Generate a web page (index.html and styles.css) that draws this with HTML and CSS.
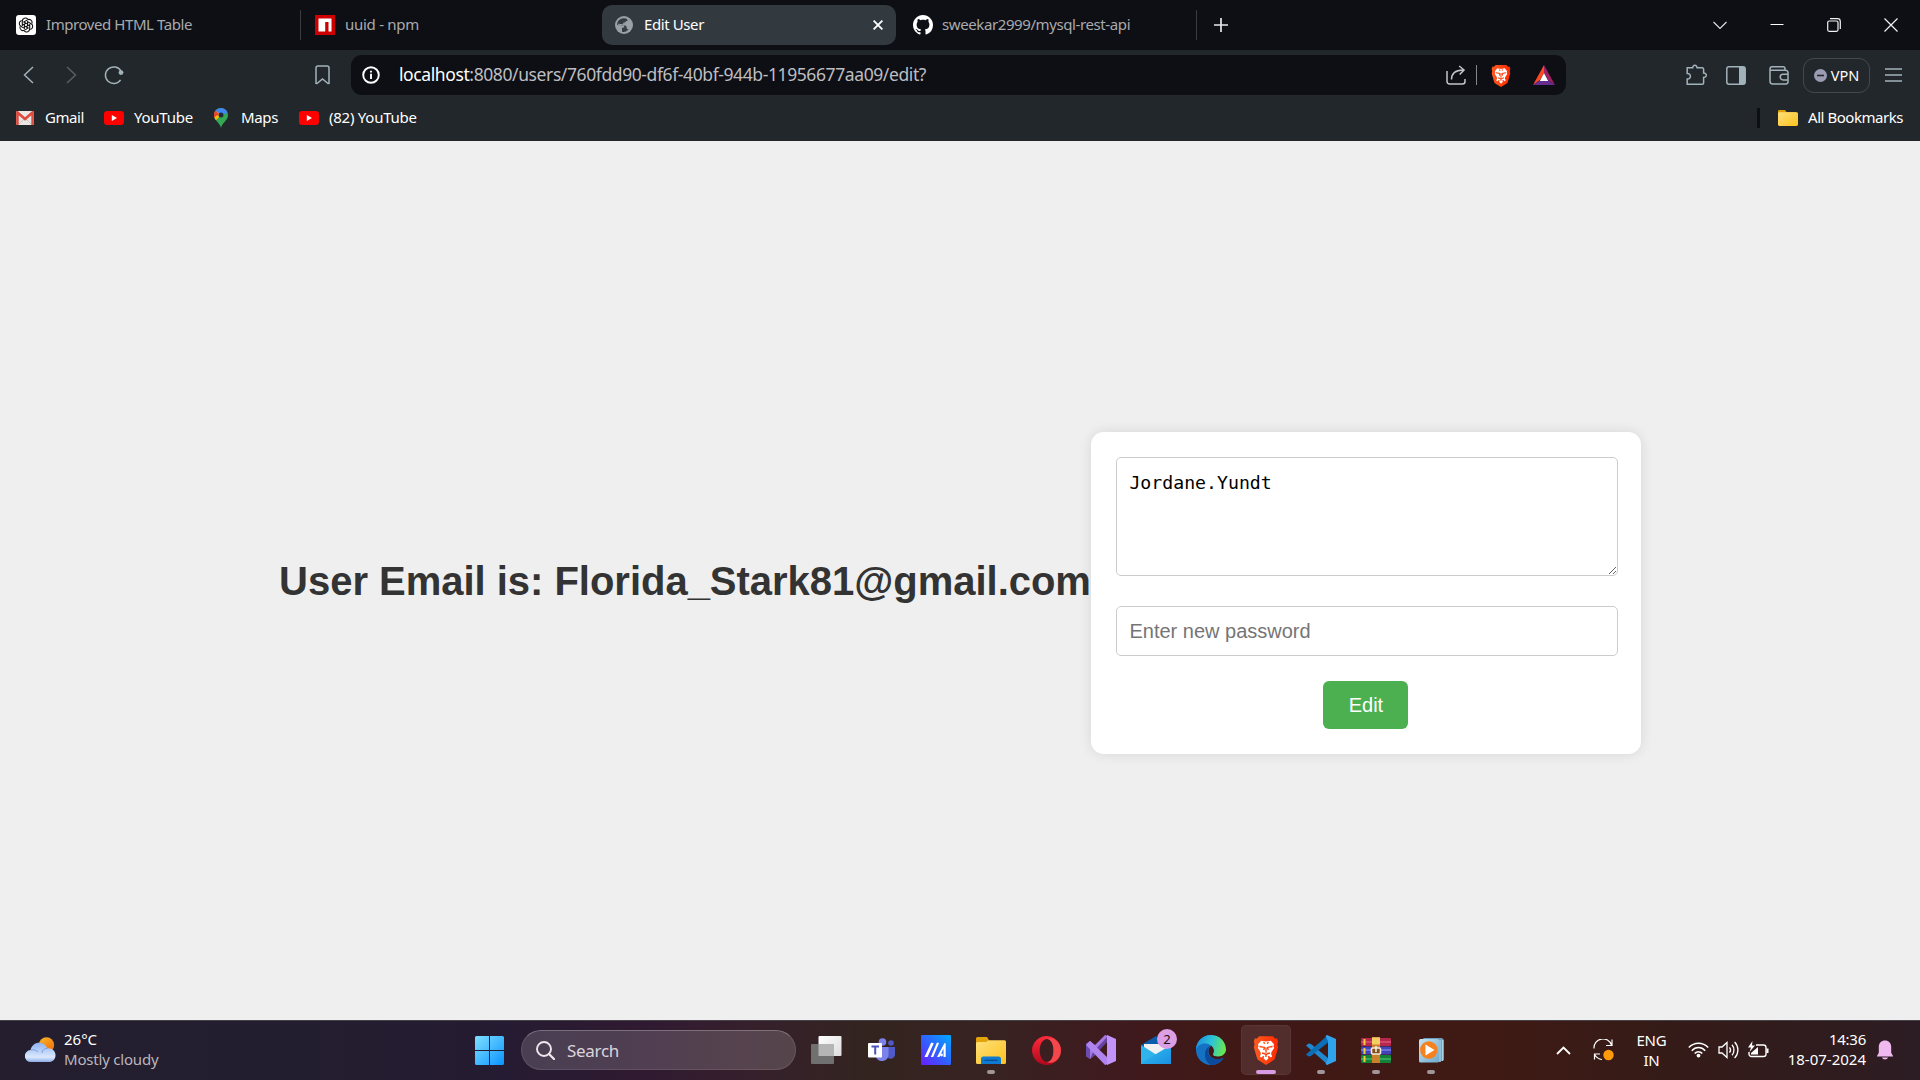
FILE: index.html
```html
<!DOCTYPE html>
<html lang="en">
<head>
<meta charset="utf-8">
<title>Edit User</title>
<link rel="stylesheet" href="styles.css">
</head>
<body>
<svg class="defs" width="0" height="0" aria-hidden="true">
  <defs>
    <linearGradient id="gWin" x1="0" y1="0" x2="1" y2="1"><stop offset="0" stop-color="#7fe0ff"/><stop offset="1" stop-color="#0a93ff"/></linearGradient>
    <linearGradient id="gSun" x1="0" y1="0" x2="0.6" y2="1"><stop offset="0" stop-color="#fbb829"/><stop offset="1" stop-color="#f0700a"/></linearGradient>
    <linearGradient id="gCloud" x1="0" y1="0" x2="0" y2="1"><stop offset="0" stop-color="#8fb3f2"/><stop offset="0.75" stop-color="#dbe8fc"/><stop offset="1" stop-color="#8cabe6"/></linearGradient>
    <linearGradient id="gAsus" x1="0" y1="1" x2="1" y2="0"><stop offset="0" stop-color="#6a1cff"/><stop offset="0.5" stop-color="#2f63ff"/><stop offset="1" stop-color="#00a9ff"/></linearGradient>
    <linearGradient id="gFolder" x1="0" y1="0" x2="1" y2="1"><stop offset="0" stop-color="#ffe07a"/><stop offset="1" stop-color="#fcc21e"/></linearGradient>
    <linearGradient id="gEdge" x1="0" y1="0.3" x2="1" y2="0.5"><stop offset="0" stop-color="#1d8fe0"/><stop offset="0.5" stop-color="#2cc3d6"/><stop offset="1" stop-color="#6be84f"/></linearGradient>
    <linearGradient id="gOpera" x1="0" y1="0" x2="0" y2="1"><stop offset="0" stop-color="#ff2b3c"/><stop offset="1" stop-color="#b0081c"/></linearGradient>
    <linearGradient id="gBrave" x1="0" y1="0" x2="1" y2="0"><stop offset="0" stop-color="#ff5a1f"/><stop offset="1" stop-color="#ff2a00"/></linearGradient>
    <linearGradient id="gMail" x1="0" y1="0" x2="1" y2="1"><stop offset="0" stop-color="#35c3f3"/><stop offset="1" stop-color="#1a8fe0"/></linearGradient>
    <linearGradient id="gView" x1="0" y1="0" x2="1" y2="1"><stop offset="0" stop-color="#ffffff"/><stop offset="1" stop-color="#dcdcdc"/></linearGradient>
    <linearGradient id="gMedia" x1="0" y1="0" x2="1" y2="1"><stop offset="0" stop-color="#c4e4f4"/><stop offset="1" stop-color="#6fa9cc"/></linearGradient>
    <symbol id="youtube" viewBox="0 0 20 14"><rect width="20" height="14" rx="3.2" fill="#f00"/><path d="M7.8 4.1v5.8L13 7z" fill="#fff"/></symbol>
    <symbol id="brave" viewBox="0 0 24 28">
      <path d="M5.6 1.2h12.8L20.6 3.400l1.700-.3L23.400 6.200l-.7 2.200.6 3.200-2.800 9.600c-.4 1.300-1 2-2 2.700L12 28l-6.500-4.100c-1-.7-1.600-1.400-2-2.700L.7 11.600l.6-3.200L.6 6.200 1.700 3.100l1.700.3z" fill="url(#gBrave)"/>
      <path d="M7.500 5.300l4.500.7 4.500-.7 3 3.400-.5 1.500.6 2-2.600 4-.2 1.700 1 1.900-1.200 1.200-2.400-1.700-.5.800.6 1.500L12 24l-2.300-2.400.6-1.500-.5-.8-2.400 1.700-1.200-1.200 1-1.900-.2-1.700-2.600-4 .6-2-.5-1.500z" fill="#fff"/>
      <path d="M5.900 10.700l4.700.9-.7 2.500M18.100 10.700l-4.700.9.7 2.500M9.600 6.900l1.500 1M14.400 6.900l-1.500 1M12 12v4.600M8.300 16.800l2.500.7 1.200 1 1.200-1 2.500-.7M12 18.500v2" fill="none" stroke="#ff4210" stroke-width="1.300"/>
    </symbol>
  </defs>
</svg>

<header class="browser">
  <div class="tabs">
    <div class="tab">
      <svg width="20" height="20" viewBox="0 0 20 20"><rect width="20" height="20" rx="3" fill="#fff"/><g fill="none" stroke="#111" stroke-width="1.100"><path id="petal" d="M10 8.200L6.300 10.300V6.200a3.100 3.100 0 0 1 5.400-2.100"/><use href="#petal" transform="rotate(60 10 10)"/><use href="#petal" transform="rotate(120 10 10)"/><use href="#petal" transform="rotate(180 10 10)"/><use href="#petal" transform="rotate(240 10 10)"/><use href="#petal" transform="rotate(300 10 10)"/></g></svg>
      <span class="tab-title t1">Improved HTML Table</span>
    </div>
    <div class="tab tab-npm">
      <svg width="20" height="20" viewBox="0 0 20 20"><path d="M0 0h20v20H0z" fill="#c00"/><path d="M3.500 3.500h13v13h-3V7h-3.300v9.500H3.500z" fill="#fff"/></svg>
      <span class="tab-title t2">uuid - npm</span>
    </div>
    <div class="tab tab-active">
      <svg width="18" height="18" viewBox="0 0 18 18"><circle cx="9" cy="9" r="9" fill="#9aa0a6"/><path d="M3.600 4.600c-1 1.300-1.500 2.800-1.400 4.400l5 .2c1.800.1 2.300 1.300 2 2.300l-2.200.2v4c3 .7 5-.6 6.500-2.500l-1.600-.2-.3-2.200-1.200-1.200H8.200L7.800 7.500l2.300-.5.600-1.700 2-.6-1-1.900C9 1.600 6 2.200 3.600 4.600z" fill="#343c41"/><path d="M3 8.200l5 .6M8.200 7.200l2.600-.4 1.600.8" stroke="#9aa0a6" fill="none"/></svg>
      <span class="tab-title t3">Edit User</span>
      <svg class="tab-close" width="10" height="10" viewBox="0 0 10 10"><path d="M.6.600l8.800 8.800M9.400.6L.6 9.400" stroke="#fff" stroke-width="1.800"/></svg>
    </div>
    <div class="tab tab-github">
      <svg width="20" height="20" viewBox="0 0 16 16"><path fill="#fff" d="M8 0C3.580 0 0 3.580 0 8c0 3.540 2.290 6.530 5.470 7.590.4.070.55-.17.55-.38 0-.19-.01-.82-.01-1.490-2.010.37-2.530-.49-2.690-.94-.09-.23-.48-.94-.82-1.130-.28-.15-.68-.52-.01-.53.630-.01 1.080.580 1.230.820.720 1.210 1.870.870 2.330.660.070-.52.280-.87.510-1.070-1.780-.2-3.640-.89-3.640-3.950 0-.87.310-1.590.820-2.150-.08-.2-.36-1.020.080-2.120 0 0 .670-.21 2.200.820.640-.18 1.320-.27 2-.27s1.360.090 2 .270c1.530-1.040 2.200-.82 2.200-.82.440 1.100.160 1.920.080 2.120.510.560.820 1.270.820 2.150 0 3.070-1.870 3.750-3.650 3.950.290.250.540.730.540 1.480 0 1.070-.01 1.930-.01 2.200 0 .210.150.460.550.380A8.010 8.010 0 0 0 16 8c0-4.420-3.580-8-8-8z"/></svg>
      <span class="tab-title t4">sweekar2999/mysql-rest-api</span>
    </div>
    <svg class="new-tab" width="14" height="14" viewBox="0 0 14 14"><path d="M7 0v14M0 7h14" stroke="#e8e8ea" stroke-width="1.700"/></svg>
    <div class="window-controls">
      <svg width="14" height="14" viewBox="0 0 14 14"><path d="M.5 4L7 10.500 13.500 4" stroke="#e4e4e6" stroke-width="1.100" fill="none"/></svg>
      <svg width="14" height="14" viewBox="0 0 14 14"><path d="M.5 6.500h13" stroke="#fff"/></svg>
      <svg width="14" height="14" viewBox="0 0 14 14"><rect x=".7" y="3" width="10.300" height="10.300" rx="1.500" stroke="#f2f2f2" stroke-width="1.200" fill="none"/><path d="M3 .7h7.500a2.800 2.800 0 0 1 2.800 2.800V11" stroke="#f2f2f2" stroke-width="1.200" fill="none"/></svg>
      <svg width="14" height="14" viewBox="0 0 14 14"><path d="M.5.500l13 13M13.500.5l-13 13" stroke="#f2f2f2" stroke-width="1.200"/></svg>
    </div>
  </div>

  <div class="toolbar">
    <svg width="11" height="18" viewBox="0 0 11 18"><path d="M10 1L1.500 9l8.500 8" fill="none" stroke="#a2b2ba" stroke-width="1.500"/></svg>
    <svg width="11" height="18" viewBox="0 0 11 18"><path d="M1 1l8.500 8L1 17" fill="none" stroke="#566067" stroke-width="1.500"/></svg>
    <svg width="20" height="20" viewBox="0 0 20 20"><path d="M16.600 14.900A8.300 8.300 0 1 1 17 6.200" fill="none" stroke="#a2b2ba" stroke-width="1.500"/><circle cx="17" cy="7.600" r="2.400" fill="#a2b2ba"/></svg>
    <svg width="15" height="20" viewBox="0 0 15 20"><path d="M1 18.300V3a2 2 0 0 1 2-2h9a2 2 0 0 1 2 2v15.300l-1 .2-5.500-4.600L2 18.500z" fill="none" stroke="#a2b2ba" stroke-width="1.500"/></svg>
    <div class="address">
      <svg width="18" height="18" viewBox="0 0 18 18"><circle cx="9" cy="9" r="7.800" fill="none" stroke="#fff" stroke-width="1.900"/><path d="M9 7.800v5.200M9 4.700v1.900" stroke="#fff" stroke-width="1.900"/></svg>
      <span class="url"><b>localhost</b>:8080/users/760fdd90-df6f-40bf-944b-11956677aa09/edit?</span>
      <svg class="share" width="20" height="20" viewBox="0 0 20 20"><path d="M1 6v10.500A2.500 2.500 0 0 0 3.500 19h13a2.500 2.500 0 0 0 2.500-2.500V14" fill="none" stroke="#c3c5ca" stroke-width="1.500"/><path d="M5.500 14.500c0-6 3-9.300 11.500-9.500M13.200 1L18 5l-4.300 4.500" fill="none" stroke="#c3c5ca" stroke-width="1.500"/></svg>
      <i class="divider"></i>
      <svg class="shield" width="20" height="23"><use href="#brave"/></svg>
      <svg width="22" height="20" viewBox="0 0 22 20"><path d="M11 0v8L7 15l-7 5z" fill="#ff4724"/><path d="M11 0v8l4 7 7 5z" fill="#9e1f63"/><path d="M0 20h22l-6.500-4.500h-9z" fill="#662d91"/><path d="M11 8l4.200 8H6.800z" fill="#fff"/></svg>
    </div>
    <svg class="ext" width="21" height="22" viewBox="0 0 21 22"><path d="M1.200 3.800H6.700C6.400.5 11.300.5 11 3.800h5.300a1.300 1.300 0 0 1 1.300 1.300v4c3.600-.3 3.600 4.600 0 4.300v5.500a1.300 1.300 0 0 1-1.300 1.300H1.200v-5.100c4.300.3 4.300-6 0-5.700z" fill="none" stroke="#a2b2ba" stroke-width="1.500"/></svg>
    <svg width="20" height="19" viewBox="0 0 20 19"><rect x=".8" y=".8" width="18.400" height="17.400" rx="2.200" fill="none" stroke="#a2b2ba" stroke-width="1.500"/><path d="M13 1h4.500A1.500 1.500 0 0 1 19 2.500v14a1.500 1.500 0 0 1-1.500 1.500H13z" fill="#a2b2ba"/></svg>
    <svg width="20" height="19" viewBox="0 0 20 19"><path d="M16 4V2.800A2 2 0 0 0 14 .8H3a2 2 0 0 0-2 2v12.500A2.700 2.700 0 0 0 3.700 18h13a2.300 2.300 0 0 0 2.300-2.300V6.600a2.300 2.300 0 0 0-2.300-2.300H1.500M19 8.300h-5a2.800 2.800 0 0 0 0 5.600h5" fill="none" stroke="#a2b2ba" stroke-width="1.500"/></svg>
    <div class="vpn"><svg width="13" height="13" viewBox="0 0 13 13"><circle cx="6.500" cy="6.500" r="6.500" fill="#9b9bb3"/><path d="M3 6.500h7" stroke="#23282c" stroke-width="1.600"/></svg><span>VPN</span></div>
    <svg width="17" height="14" viewBox="0 0 17 14"><path d="M0 1h17M0 7h17M0 13h17" stroke="#a2b2ba" stroke-width="1.500"/></svg>
  </div>

  <nav class="bookmarks">
    <a class="mark gmail"><svg width="18" height="14" viewBox="0 0 18 14"><rect width="18" height="14" rx="1" fill="#e9e6e4"/><path d="M3 13l6-6 6 6" stroke="#c9c5c2" fill="none"/><path d="M1.400 14V1.400L9 8l7.600-6.600V14" fill="none" stroke="#dd4b3e" stroke-width="2.600"/></svg><span>Gmail</span></a>
    <a class="mark tube"><svg width="20" height="14"><use href="#youtube"/></svg><span>YouTube</span></a>
    <a class="mark maps"><svg width="14" height="20" viewBox="0 0 14 20"><path d="M7 20C6.300 15 0 12.800 0 7a7 7 0 0 1 14 0c0 5.800-6.300 8-7 13z" fill="#34a853"/><path d="M0 7c0 2.100.8 3.800 1.900 5.200L9.500 4.500 2 2.200A7 7 0 0 0 0 7z" fill="#fbbc04"/><path d="M1.600 2.600A7 7 0 0 0 .3 9.400L5 6z" fill="#ea4335"/><path d="M1.600 2.600a7 7 0 0 1 11.900 2L8 7.500 5.500 5.800z" fill="#4285f4"/><circle cx="7" cy="7" r="2.500" fill="#202c3c"/></svg><span>Maps</span></a>
    <a class="mark tube"><svg width="20" height="14"><use href="#youtube"/></svg><span>(82) YouTube</span></a>
    <i class="marks-divider"></i>
    <a class="mark all"><svg width="20" height="16" viewBox="0 0 20 16"><path d="M1 0h6l1.500 2H18v4H0V1a1 1 0 0 1 1-1z" fill="#e0a008"/><rect y="2.200" width="20" height="13.800" rx="1.400" fill="url(#gFolder)"/></svg><span>All Bookmarks</span></a>
  </nav>
</header>

<main class="page">
  <h1 class="heading">User Email is: Florida_Stark81@gmail.com</h1>
  <form class="card">
    <textarea class="field username" spellcheck="false">Jordane.Yundt</textarea>
    <input class="field password" type="text" placeholder="Enter new password">
    <button class="submit" type="button">Edit</button>
  </form>
</main>

<footer class="taskbar">
  <div class="weather">
    <svg width="31" height="26" viewBox="0 0 31 26"><circle cx="21.500" cy="8" r="7.700" fill="url(#gSun)"/><path d="M6 25a6 6 0 0 1-.4-12C6.500 8.500 10 5.800 14 5.800c4 0 7 2 8.300 5.600C27 10.800 30.500 14 30.500 18.200c0 4-3 6.800-6.500 6.800z" fill="url(#gCloud)"/><path d="M5.500 13c3-.7 6 0 7.500 2M17 16c0-3 2.500-4.800 5.300-4.600" fill="none" stroke="#7c9fe2"/></svg>
    <p class="weather-text"><span>26°C</span><span class="condition">Mostly cloudy</span></p>
  </div>
  <div class="apps">
    <div class="app"><svg width="29" height="29" viewBox="0 0 29 29"><path d="M0 1.500A1.500 1.500 0 0 1 1.500 0H14v14H0zM15 0h12.500A1.500 1.500 0 0 1 29 1.500V14H15zM0 15h14v14H1.500A1.500 1.500 0 0 1 0 27.500zM15 15h14v12.500a1.500 1.500 0 0 1-1.500 1.500H15z" fill="url(#gWin)"/></svg></div>
    <div class="search"><svg width="19" height="19" viewBox="0 0 19 19"><circle cx="8" cy="8" r="7" fill="none" stroke="#eee8ee" stroke-width="1.900"/><path d="M13 13l5 5" stroke="#eee8ee" stroke-width="2.300" stroke-linecap="round"/></svg><span>Search</span></div>
    <div class="app"><svg width="31" height="28" viewBox="0 0 31 28"><rect x="7.500" width="23" height="20" rx="1" fill="url(#gView)"/><rect y="8" width="23" height="20" rx="1" fill="#707070"/><path d="M7.500 8H23v12H7.500z" fill="#b5b5b5"/></svg></div>
    <div class="app"><svg width="27" height="24" viewBox="0 0 27 24"><circle cx="23" cy="5" r="2.800" fill="#5059c9"/><circle cx="14.500" cy="4" r="3.800" fill="#7b83eb"/><path d="M19 9h8v7.500a4.500 4.500 0 0 1-8 2.500z" fill="#5059c9"/><path d="M8 9h12.500v8a6.500 6.500 0 0 1-12.500 2z" fill="#7b83eb"/><rect y="5" width="14" height="14.500" rx="1" fill="#fff"/><path d="M3.500 8.500h7.500M7.200 8.500v8" stroke="#4b53bc" stroke-width="2"/></svg></div>
    <div class="app"><svg width="30" height="30" viewBox="0 0 30 30"><rect width="30" height="30" rx="1" fill="url(#gAsus)"/><path d="M3.500 22L10.200 7.500l2.600.8L6.500 22zM9.800 22L16 7.500l2 .6L12.200 22zM16 22l7.500-14 1.200.5V22h-2.200V13.500l-4 8.500z" fill="#fff"/><circle cx="20.500" cy="20" r="1.400" fill="#fff"/></svg></div>
    <div class="app running"><svg width="30" height="27" viewBox="0 0 30 27"><path d="M1.500 0H11l2.500 4H29v5H0V1.500A1.500 1.500 0 0 1 1.500 0z" fill="#e2a30b"/><path d="M0 6.500A1.500 1.500 0 0 1 1.500 5H10l3-1.700h15.500A1.500 1.500 0 0 1 30 4.800V25.500a1.500 1.500 0 0 1-1.500 1.500h-27A1.500 1.500 0 0 1 0 25.500z" fill="url(#gFolder)"/><path d="M5 27v-5a2.500 2.500 0 0 1 2.500-2.500h15A2.500 2.500 0 0 1 25 22v5z" fill="#0f7bd0"/><path d="M8.500 23.300h13" stroke="#064f91" stroke-width="1.300"/></svg></div>
    <div class="app"><svg width="29" height="29" viewBox="0 0 29 29"><path d="M14.500 0a14.500 14.500 0 1 0 .01 0zM15 3c4 0 6.500 5 6.500 11.500S19 26 15 26 7.700 21 7.700 14.500 11 3 15 3z" fill="url(#gOpera)" fill-rule="evenodd"/><path d="M15 3c4 0 6.500 5 6.500 11.500S19 26 15 26c5 3 13.900-2 13.900-11.500S20 0 15 3z" fill="#f4474b"/></svg></div>
    <div class="app"><svg width="30" height="30" viewBox="0 0 30 30"><path d="M0 9l4-3 5 4 10-10 3 1L9 20l-5 4-4-3z" fill="#a678e4"/><path d="M0 9l4-3v18l-4-3z" fill="#6c4bb0"/><path d="M4 24l5-4L22 6V1L7 17z" fill="#65449f"/><path d="M4 6l18 17v6l-3 1L0 10z" fill="#b084ee"/><path d="M21 0l9 4v22l-9 4z" fill="#c493fa"/></svg></div>
    <div class="app"><svg width="30" height="28" viewBox="0 0 30 28"><path d="M0 9L15 0l15 9v5H0z" fill="#0b5cab"/><path d="M3 8h24v9L15 20 3 14z" fill="#f1f1f1"/><path d="M0 9l30 19H0z" fill="#2fb4ec"/><path d="M30 9v19H3l-3-1z" fill="url(#gMail)"/></svg><b class="badge">2</b></div>
    <div class="app"><svg width="30" height="30" viewBox="0 0 30 30"><path d="M15 0C6 0 0 7 0 15c0 8 6.500 15 15 15 6 0 10-3 12.500-7-8 3-14 0-15-6-.4-3 1-5 3-6.500z" fill="#1471c4"/><path d="M15 0C6 0 0 7 0 15c1.500-5 6-7 10-6.500 5 .5 8 4 8 7.500 0 1.500-1 2.500-1 3.500 0 1 2 2 5 2 5 0 8-3.500 8-7C30 6 23 0 15 0z" fill="url(#gEdge)"/><path d="M9 20c0-5 2-8 6-9.500-3 2-4 6-2 9.500 2.500 4 8 5 14.500 3C24 28 20 30 15 30c-4-2-6-6-6-10z" fill="#0c4a9c"/></svg></div>
    <div class="app running active"><svg width="26" height="30"><use href="#brave"/></svg></div>
    <div class="app running"><svg width="30" height="30" viewBox="0 0 30 30"><path d="M0 10.500L2.500 8.500 5 9l17 14v7z" fill="#1f88d0"/><path d="M0 19.500l2.500 2L5 21 22 7.500V0z" fill="#0d6fb8"/><path d="M21 0l9 4v22l-9 4-1.500-1 2.500-5V6l-2.500-5z" fill="#2fa3ec"/></svg></div>
    <div class="app running"><svg width="30" height="26" viewBox="0 0 30 26"><rect y="1" width="30" height="8" rx="1" fill="#b5274d"/><path d="M0 5h30" stroke="#d9527a" stroke-width="1.500"/><rect y="9.500" width="30" height="8" rx="1" fill="#4144b8"/><path d="M0 13h30" stroke="#7c7fe8" stroke-width="1.500"/><rect y="18" width="30" height="8" rx="1" fill="#15803a"/><path d="M0 22h30" stroke="#3db765" stroke-width="1.500"/><path d="M3.500 2v6M3.500 11v6M3.500 19v6" stroke="#f0cd34" stroke-width="2"/><rect x="11" width="8" height="26" fill="#c9822b"/><path d="M11 4h8" stroke="#f3cf63" stroke-width="7"/><rect x="10.500" y="11" width="9" height="6" rx="1" fill="#85501c" stroke="#f2ebdc" stroke-width="1.600"/><path d="M15 9v6" stroke="#f2ebdc" stroke-width="1.600"/></svg></div>
    <div class="app running"><svg width="25" height="25" viewBox="0 0 25 25"><path d="M4 0h19l2 2v20l-5 2z" fill="#6d9ebd"/><path d="M21 2v22M23.500 2v21" stroke="#a5d2e8" stroke-width="1.300"/><rect y="1" width="20" height="23.500" rx="1.500" fill="url(#gMedia)"/><circle cx="9.800" cy="12" r="8.700" fill="#f5821f"/><path d="M6.500 6.500v11L15.500 12z" fill="#fff"/></svg></div>
  </div>
  <div class="tray">
    <svg width="15" height="9" viewBox="0 0 15 9"><path d="M1 8l6.500-6.500L14 8" fill="none" stroke="#fff" stroke-width="1.800"/></svg>
    <svg class="sync" width="21" height="22" viewBox="0 0 21 22"><path d="M1 9.500A9 9 0 0 1 18.500 6M19 .5v6h-6M7 15H1.500v5.500M1.500 15.500c1.300 2.200 4 4.500 7.500 5" fill="none" stroke="#fff" stroke-width="1.200"/><circle cx="15.500" cy="16" r="5.200" fill="#ff9a0a"/></svg>
    <p class="lang"><span>ENG</span><span>IN</span></p>
    <svg width="21" height="16" viewBox="0 0 21 16"><g fill="none" stroke="#fff" stroke-width="1.500"><path d="M.8 5.600c5.400-5.800 14-5.800 19.400 0"/><path d="M3.800 8.700c3.700-4.200 9.700-4.200 13.400 0"/><path d="M6.700 11.600c2.100-2.500 5.500-2.500 7.600 0"/></g><circle cx="10.500" cy="13.600" r="1.900" fill="#fff"/></svg>
    <svg class="volume" width="21" height="18" viewBox="0 0 21 18"><path d="M1 6v6h3l5 4.500v-15L4 6z" fill="none" stroke="#fff" stroke-width="1.300"/><path d="M11.500 6.300c1.200 1.500 1.200 3.900 0 5.400M14 3.700c2.600 3 2.600 7.600 0 10.600M16.600 1c4.400 4.500 4.400 11.500 0 16" fill="none" stroke="#fff" stroke-width="1.300"/></svg>
    <svg class="battery" width="21" height="18" viewBox="0 0 21 18"><path d="M8 4h7.500A2.500 2.500 0 0 1 18 6.500V13a2.500 2.500 0 0 1-2.500 2.500h-12A2.500 2.500 0 0 1 1 13v-2" fill="none" stroke="#fff" stroke-width="1.400"/><path d="M3 13.500h7V6L3 12zM18.500 7.500H20.500v4.500h-2zM4.500 0L0 6.500h3L1.500 11 7 4.500H4z" fill="#fff"/></svg>
    <p class="clock"><span class="time">14:36</span><span class="date">18-07-2024</span></p>
    <svg width="16" height="20" viewBox="0 0 16 20"><path d="M8 .5c3.700 0 6.200 2.700 6.200 6.200v6L16 16v.5H0V16l1.800-3.300v-6C1.800 3.200 4.300.5 8 .5zM5 17.500h6c-.5 2.500-5.500 2.500-6 0z" fill="#f0b9ef"/></svg>
  </div>
</footer>
</body>
</html>
```
FILE: styles.css
```css
* { box-sizing: border-box; }

body {
  margin: 0;
  width: 1920px;
  height: 1080px;
  overflow: hidden;
  display: flex;
  flex-direction: column;
  font-family: "Noto Sans", "Open Sans", sans-serif;
  color: #fff;
}

svg { display: block; flex: none; }
.defs { position: absolute; }
p { margin: 0; }
span { white-space: nowrap; }

/* Browser chrome */
.browser { height: 141px; flex: none; background: #22272b; }

.tabs {
  height: 50px;
  display: flex;
  align-items: center;
  background: #0e0f14;
}
.tab {
  width: 301px;
  height: 30px;
  padding-left: 16px;
  display: flex;
  align-items: center;
  gap: 10px;
  border-right: 1px solid #3a3b40;
  color: #a9aaae;
  font-size: 15px;
}
.tab-title { padding-bottom: 2px; }
.t1 { letter-spacing: -0.43px; }
.t2 { letter-spacing: -0.28px; }
.t3 { letter-spacing: -0.4px; }
.t4 { letter-spacing: -0.4px; }
.tab-npm { padding-left: 14px; border-right: 0; }
.tab-active {
  width: 294px;
  height: 40px;
  margin: 0 7px 0 0;
  padding: 0 13px;
  gap: 11px;
  border: 0;
  border-radius: 10px;
  background: #323a40;
  color: #fff;
}
.tab-close { margin-left: auto; }
.tab-github { width: 294px; padding-left: 10px; gap: 9px; }
.new-tab { margin-left: 17px; }
.window-controls { margin-left: auto; padding-right: 22px; display: flex; gap: 43px; }

.toolbar {
  height: 50px;
  padding-left: 23px;
  display: grid;
  grid-template-columns: 43px 38px 211px 36px 1215px 160px 43px 34px 82px auto;
  align-items: center;
}
.address {
  height: 40px;
  padding: 0 11px;
  display: flex;
  align-items: center;
  border-radius: 11px;
  background: #0e0f14;
}
.url {
  margin-left: 19px;
  padding-bottom: 2px;
  font-size: 17.500px;
  letter-spacing: -0.4px;
  color: #bdbec2;
}
.url b { font-weight: 400; color: #fff; }
.share { margin-left: auto; }
.divider { width: 1px; height: 20px; margin: 0 14px 0 10px; background: #85868a; }
.shield { margin-right: 22px; }
.ext { margin-left: 120px; }
.vpn {
  width: 67px;
  height: 35px;
  display: flex;
  align-items: center;
  justify-content: center;
  gap: 4px;
  border: 1px solid #3f4a50;
  border-radius: 11px;
  font-size: 14.500px;
}

.bookmarks {
  height: 36px;
  padding: 0 17px 0 16px;
  display: flex;
  align-items: center;
  font-size: 15px;
  letter-spacing: -0.25px;
}
.mark { display: flex; align-items: center; gap: 10px; }
.mark span { padding-bottom: 2px; }
.gmail { width: 88px; gap: 11px; letter-spacing: -0.42px; }
.tube { width: 110px; }
.maps { width: 85px; gap: 13px; letter-spacing: -0.36px; }
.marks-divider { width: 3px; height: 20px; margin-left: auto; background: #0e0f14; }
.all { margin-left: 18px; letter-spacing: -0.46px; }

/* Page content */
.page {
  flex: 1;
  display: flex;
  align-items: center;
  justify-content: center;
  background: #efefef;
  color: #333;
  font-family: "Liberation Sans", Arial, sans-serif;
}
.heading { margin: 0; font-size: 40px; line-height: 46px; letter-spacing: -0.02px; }
.card {
  width: 550px;
  margin-top: 25px;
  padding: 25px 23px 25px 25px;
  display: flex;
  flex-direction: column;
  align-items: center;
  border-radius: 12.500px;
  background: #fff;
  box-shadow: 0 0 12.500px rgba(0, 0, 0, 0.1);
}
.field {
  width: 502px;
  padding: 12.500px;
  border: 1px solid #ccc;
  border-radius: 5px;
  background: #fff;
  color: #000;
  font: 20px "Liberation Sans", Arial, sans-serif;
}
.username {
  height: 119px;
  margin-bottom: 30px;
  font: 18.200px/24px "DejaVu Sans Mono", monospace;
}
.password { height: 50px; margin-bottom: 25px; }
.password::placeholder { color: #757575; }
.submit {
  width: 85px;
  height: 48px;
  margin-right: 2px;
  padding: 0;
  border: 0;
  border-radius: 6px;
  background: #4caf50;
  color: #fff;
  font: 20px "Liberation Sans", Arial, sans-serif;
}

/* Taskbar */
.taskbar {
  height: 60px;
  flex: none;
  display: flex;
  padding-bottom: 1px;
  border-top: 1px solid #46424a;
  background: linear-gradient(90deg, #241e2f 0, #231e2f 300px, #251b32 500px, #301a31 650px, #36202c 750px, #33241f 870px, #372322 980px, #3f1a1e 1120px, #401816 1220px, #3f1a14 1500px, #361b17 1640px, #2e1c20 1860px, #2c1d24 1920px);
}
.weather { width: 462px; padding-left: 25px; display: flex; align-items: center; gap: 8px; }
.weather-text {
  display: flex;
  flex-direction: column;
  padding-bottom: 3px;
  font-size: 15px;
  line-height: 20px;
}
.condition { letter-spacing: -0.2px; color: #b9b6bd; }

.apps { display: flex; align-items: center; }
.app {
  position: relative;
  width: 50px;
  height: 50px;
  margin: 0 2.500px;
  display: flex;
  align-items: center;
  justify-content: center;
}
.active { border-radius: 5px; background: rgba(255, 255, 255, 0.09); box-shadow: inset 0 0 0 1px rgba(255, 255, 255, 0.05); }
.running::after {
  content: "";
  position: absolute;
  bottom: 1px;
  width: 8px;
  height: 4px;
  border-radius: 2px;
  background: #a09697;
}
.active::after { width: 20px; background: #d99be2; }
.badge {
  position: absolute;
  top: 4px;
  right: 4px;
  width: 20px;
  height: 20px;
  border-radius: 50%;
  background: #dc9fe4;
  color: #1b1020;
  font-size: 13px;
  font-weight: 400;
  line-height: 20px;
  text-align: center;
}
.search {
  width: 275px;
  height: 40px;
  margin: 0 2.500px 0 4px;
  padding-left: 14px;
  display: flex;
  align-items: center;
  gap: 12px;
  border: 1px solid rgba(255, 255, 255, 0.1);
  border-top-color: rgba(255, 255, 255, 0.25);
  border-radius: 20px;
  background: rgba(255, 255, 255, 0.16);
  color: #dcd5dc;
  font-size: 17px;
  letter-spacing: -0.3px;
}

.tray {
  margin-left: auto;
  padding-right: 27px;
  display: flex;
  align-items: center;
  font-size: 15px;
  line-height: 20px;
}
.tray p { display: flex; flex-direction: column; }
.sync { margin: 0 22px; }
.tray .lang { width: 31px; margin-right: 21px; padding-bottom: 1px; align-items: center; letter-spacing: -0.22px; }
.volume { margin-left: 9px; }
.battery { margin: 0 19px 0 9px; }
.tray .clock { width: 78px; margin-right: 11px; padding-bottom: 3px; align-items: flex-end; }
.time { letter-spacing: -0.27px; }
```
